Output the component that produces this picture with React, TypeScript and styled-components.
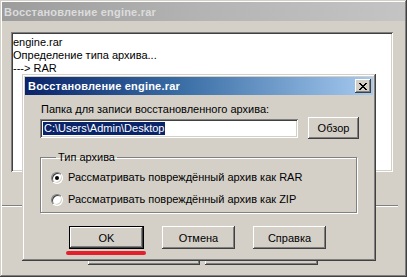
import React from 'react';
import styled, { createGlobalStyle } from 'styled-components';

const Global = createGlobalStyle`
    html, body {
        margin: 0;
        padding: 0;
        background: #d4d0c8;
    }
    body {
        font-family: 'Liberation Sans', Arial, sans-serif;
        font-size: 11px;
        color: #000;
    }
`;

const App = () => {
    return (
        <>
            <Global />
            <Window>
                <TitleBar $active={false}>
                    <TitleText $active={false}>Восстановление engine.rar</TitleText>
                </TitleBar>
                <WindowBody>
                    <LogBox>
                        <LogLine>engine.rar</LogLine>
                        <LogLine>Определение типа архива...</LogLine>
                        <LogLine>---&gt; RAR</LogLine>
                    </LogBox>
                    <Separator />
                    <BackButtons>
                        <Button $width={112} $height={23}>Фоновый</Button>
                        <Button $width={113} $height={23}>Справка</Button>
                    </BackButtons>
                </WindowBody>

                <Dialog>
                    <TitleBar $active>
                        <TitleText $active>Восстановление engine.rar</TitleText>
                        <CloseButton type="button" aria-label="Закрыть">
                            <svg width="8" height="7" viewBox="0 0 8 7">
                                <path
                                    d="M0 0h2v1h1v1h2v-1h1v-1h2v1h-1v1h-1v1h-1v1h1v1h1v1h1v1h-2v-1h-1v-1h-2v1h-1v1h-2v-1h1v-1h1v-1h1v-1h-1v-1h-1v-1h-1z"
                                    fill="#000"
                                />
                            </svg>
                        </CloseButton>
                    </TitleBar>
                    <DialogBody>
                        <FieldLabel>Папка для записи восстановленного архива:</FieldLabel>
                        <PathRow>
                            <PathInput>
                                <Selection>C:\Users\Admin\Desktop</Selection>
                            </PathInput>
                            <Button $width={51} $height={22}>Обзор</Button>
                        </PathRow>
                        <Group>
                            <Legend>Тип архива</Legend>
                            <RadioRow>
                                <Radio $checked />
                                <span>Рассматривать повреждённый архив как RAR</span>
                            </RadioRow>
                            <RadioRow>
                                <Radio $checked={false} />
                                <span>Рассматривать повреждённый архив как ZIP</span>
                            </RadioRow>
                        </Group>
                        <ButtonRow>
                            <DefaultWrap>
                                <DefaultButton>OK</DefaultButton>
                                <Underline />
                            </DefaultWrap>
                            <Button $width={73} $height={23}>Отмена</Button>
                            <Button $width={73} $height={23}>Справка</Button>
                        </ButtonRow>
                    </DialogBody>
                </Dialog>
            </Window>
        </>
    );
};

const Window = styled.div`
    position: relative;
    width: 407px;
    height: 277px;
    box-sizing: border-box;
    padding: 2px 2px 3px 2px;
    background: #d4d0c8;
    box-shadow: inset -1px -1px #404040, inset 1px 1px #d4d0c8, inset -2px -2px #808080, inset 2px 2px #fff;
    display: flex;
    flex-direction: column;
    overflow: hidden;
`;

const TitleBar = styled.div<{ $active: boolean }>`
    display: flex;
    align-items: center;
    justify-content: space-between;
    height: ${(p) => (p.$active ? 18 : 19)}px;
    padding: 0 2px 0 ${(p) => (p.$active ? 3 : 2)}px;
    background: ${(p) =>
        p.$active
            ? 'linear-gradient(to right, #0a246a, #3a6ea5 45%, #a6caf0)'
            : 'linear-gradient(to right, #9c9c9c, #b4b4b4 50%, #c4c4c4)'};
    flex-shrink: 0;
`;

const TitleText = styled.span<{ $active: boolean }>`
    font-weight: bold;
    font-size: 11px;
    letter-spacing: 0.2px;
    color: ${(p) => (p.$active ? '#fff' : '#dcdcdc')};
    white-space: nowrap;
`;

const WindowBody = styled.div`
    flex: 1;
    display: flex;
    flex-direction: column;
    padding: 11px 10px 0 9px;
`;

const LogBox = styled.div`
    height: 140px;
    width: 382px;
    box-sizing: border-box;
    padding: 4px 2px;
    background: #fff;
    box-shadow: inset 1px 1px #808080, inset -1px -1px #fff, inset 2px 2px #404040, inset -2px -2px #d4d0c8;
`;

const LogLine = styled.div`
    line-height: 13px;
    white-space: nowrap;
`;

const Separator = styled.div`
    margin: 33px -8px 0 -9px;
    height: 1px;
    width: 396px;
    background: #808080;
    border-bottom: 1px solid #fff;
`;

const BackButtons = styled.div`
    display: flex;
    gap: 5px;
    margin: 35px 0 0 77px;
`;

const Button = styled.div<{ $width: number; $height: number }>`
    width: ${(p) => p.$width}px;
    height: ${(p) => p.$height}px;
    box-sizing: border-box;
    display: flex;
    align-items: center;
    justify-content: center;
    background: #d4d0c8;
    box-shadow: inset -1px -1px #404040, inset 1px 1px #fff, inset -2px -2px #808080, inset 2px 2px #d4d0c8;
    flex-shrink: 0;
`;

const Dialog = styled.div`
    position: absolute;
    left: 22px;
    top: 74px;
    width: 354px;
    height: 187px;
    box-sizing: border-box;
    padding: 3px;
    background: #d4d0c8;
    box-shadow: inset -1px -1px #404040, inset 1px 1px #d4d0c8, inset -2px -2px #808080, inset 2px 2px #fff;
    display: flex;
    flex-direction: column;
`;

const CloseButton = styled.button`
    width: 16px;
    height: 14px;
    padding: 0;
    border: none;
    display: flex;
    align-items: center;
    justify-content: center;
    background: #d4d0c8;
    box-shadow: inset -1px -1px #404040, inset 1px 1px #fff, inset -2px -2px #808080, inset 2px 2px #d4d0c8;
`;

const DialogBody = styled.div`
    display: flex;
    flex-direction: column;
    padding: 8px 0 0 15px;
`;

const FieldLabel = styled.div`
    line-height: 13px;
    padding-left: 1px;
`;

const PathRow = styled.div`
    display: flex;
    align-items: center;
    gap: 10px;
    margin-top: 1px;
`;

const PathInput = styled.div`
    width: 258px;
    height: 19px;
    box-sizing: border-box;
    padding: 2px 3px;
    display: flex;
    align-items: center;
    background: #fff;
    box-shadow: inset 1px 1px #808080, inset -1px -1px #fff, inset 2px 2px #404040, inset -2px -2px #d4d0c8;
`;

const Selection = styled.span`
    background: #0a246a;
    color: #fff;
    line-height: 13px;
    padding: 0 1px;
`;

const Group = styled.fieldset`
    margin: 12px 0 0 0;
    width: 317px;
    height: 62px;
    box-sizing: border-box;
    padding: 7px 0 0 10px;
    border: 1px solid #808080;
    box-shadow: inset 1px 1px #fff, 1px 1px #fff;
    display: flex;
    flex-direction: column;
    gap: 9px;
`;

const Legend = styled.legend`
    padding: 0 2px;
    margin-left: 5px;
    line-height: 13px;
`;

const RadioRow = styled.div`
    display: flex;
    align-items: center;
    gap: 5px;
    line-height: 13px;
`;

const Radio = styled.span<{ $checked: boolean }>`
    position: relative;
    width: 12px;
    height: 12px;
    box-sizing: border-box;
    border-radius: 50%;
    background: #fff;
    border: 1px solid;
    border-color: #808080 #fff #fff #808080;
    box-shadow: inset 1px 1px #404040, inset -1px -1px #d4d0c8;
    &::after {
        content: '';
        display: ${(p) => (p.$checked ? 'block' : 'none')};
        position: absolute;
        left: 3px;
        top: 3px;
        width: 4px;
        height: 4px;
        border-radius: 50%;
        background: #000;
    }
`;

const ButtonRow = styled.div`
    display: flex;
    gap: 18px;
    margin: 13px 0 0 29px;
`;

const DefaultWrap = styled.div`
    position: relative;
`;

const DefaultButton = styled.div`
    width: 75px;
    height: 23px;
    box-sizing: border-box;
    display: flex;
    align-items: center;
    justify-content: center;
    background: #d4d0c8;
    border: 1px solid #000;
    box-shadow: inset -1px -1px #404040, inset 1px 1px #fff, inset -2px -2px #808080, inset 2px 2px #d4d0c8;
`;

const Underline = styled.div`
    position: absolute;
    left: -3px;
    top: 25px;
    width: 80px;
    height: 4px;
    border-radius: 2px;
    background: #e3202a;
`;

export default App;
